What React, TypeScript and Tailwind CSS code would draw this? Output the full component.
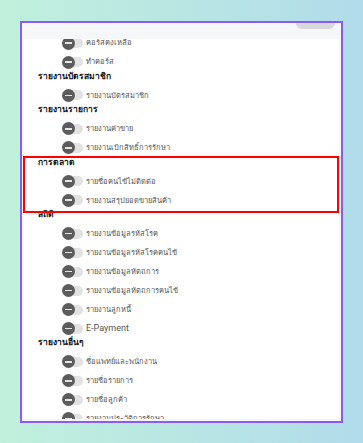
type Item = { kind: 'head' | 'row'; label: string };

const items: Item[] = [
  { kind: 'row', label: 'คอร์สคงเหลือ' },
  { kind: 'row', label: 'ทำคอร์ส' },
  { kind: 'head', label: 'รายงานบัตรสมาชิก' },
  { kind: 'row', label: 'รายงานบัตรสมาชิก' },
  { kind: 'head', label: 'รายงานรายการ' },
  { kind: 'row', label: 'รายงานค่าขาย' },
  { kind: 'row', label: 'รายงานเบิกสิทธิ์การรักษา' },
  { kind: 'head', label: 'การตลาด' },
  { kind: 'row', label: 'รายชื่อคนไข้ไม่ติดต่อ' },
  { kind: 'row', label: 'รายงานสรุปยอดขายสินค้า' },
  { kind: 'head', label: 'สถิติ' },
  { kind: 'row', label: 'รายงานข้อมูลรหัสโรค' },
  { kind: 'row', label: 'รายงานข้อมูลรหัสโรคคนไข้' },
  { kind: 'row', label: 'รายงานข้อมูลหัตถการ' },
  { kind: 'row', label: 'รายงานข้อมูลหัตถการคนไข้' },
  { kind: 'row', label: 'รายงานลูกหนี้' },
  { kind: 'row', label: 'E-Payment' },
  { kind: 'head', label: 'รายงานอื่นๆ' },
  { kind: 'row', label: 'ชื่อแพทย์และพนักงาน' },
  { kind: 'row', label: 'รายชื่อรายการ' },
  { kind: 'row', label: 'รายชื่อลูกค้า' },
  { kind: 'row', label: 'รายงานประวัติการรักษา' },
];

const Toggle = () => (
  <div className="relative w-[21px] h-[13px] shrink-0">
    <div className="absolute left-[3px] right-0 top-[1.5px] h-[10px] rounded-full bg-[#e2e2e2]" />
    <div className="absolute left-0 top-0 w-[13px] h-[13px] rounded-full bg-[#5c5c5c] flex items-center justify-center">
      <div className="w-[7px] h-[1.5px] bg-[#e6e6e6]" />
    </div>
  </div>
);

export default function App() {
  return (
    <div
      className="w-[363px] h-[443px] pl-[20px] pt-[21px] bg-linear-to-r from-[#bff1dc] to-[#b1dbea]"
      style={{ fontFamily: 'Roboto, "Noto Sans", sans-serif' }}
    >
      <div className="relative w-[323px] h-[402px] border-2 border-[#8d5af6] bg-[#f6f7f9] flex flex-col">
        {/* top strip with half hidden close button */}
        <div className="h-[16px] flex justify-end pr-[6px]">
          <div className="w-[39px] h-[6px] rounded-b-[14px] bg-[#d9d9d9]" />
        </div>

        <div className="mx-[2px] h-[380px] bg-white overflow-hidden">
          <div className="mt-[-8px] pl-[14px]">
            {items.map((item, i) =>
              item.kind === 'head' ? (
                <div
                  key={i}
                  className="h-[14.4px] flex items-center text-[8.5px] font-bold text-[#111]"
                >
                  {item.label}
                </div>
              ) : (
                <div key={i} className="h-[19px] pt-[5px] pl-[24px] flex items-center gap-[3px]">
                  <Toggle />
                  <span
                    className={
                      item.label === 'E-Payment'
                        ? 'text-[9px] text-[#555]'
                        : 'text-[7.5px] text-[#555]'
                    }
                  >
                    {item.label}
                  </span>
                </div>
              )
            )}
          </div>
        </div>

        {/* highlight box */}
        <div className="absolute left-[1px] top-[133px] w-[316px] h-[57px] border-2 border-[#ff0000]" />
      </div>
    </div>
  );
}
